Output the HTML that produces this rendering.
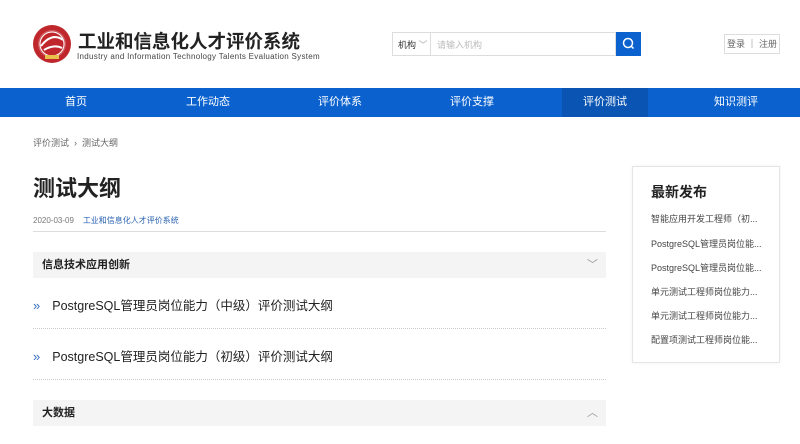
<!DOCTYPE html>
<html><head><meta charset="utf-8"><style>
*{margin:0;padding:0;box-sizing:border-box}
body{width:800px;height:444px;overflow:hidden;background:#fff;font-family:"Liberation Sans","Noto Sans CJK SC",sans-serif;position:relative;color:#333}
.a{position:absolute;white-space:nowrap}
.nav{position:absolute;left:0;top:88px;width:800px;height:29px;background:#0b62cf}
.nav span{position:absolute;top:0;height:29px;line-height:29px;color:#fff;font-size:11px;transform:translateX(-50%)}
.sec{position:absolute;left:33px;width:573px;height:26px;background:#f4f4f4;font-size:11px;font-weight:bold;line-height:26px;padding-left:9px;color:#222}
.item{position:absolute;left:33px;font-size:12.5px;color:#222}
.item b{color:#3a6fc0;font-weight:normal;margin-right:12px;font-size:13px}
.dot{position:absolute;left:33px;width:573px;border-top:1px dotted #ccc}
.side div{position:absolute;left:651px;font-size:9px;color:#444}
</style></head><body>
<svg class="a" style="left:32px;top:24px" width="40" height="40" viewBox="0 0 40 40">
<circle cx="20" cy="20" r="19" fill="#c0272d"/><circle cx="20" cy="20" r="14" fill="#fff" opacity=".25"/>
<circle cx="20" cy="20" r="12" fill="#c0272d" stroke="#fff" stroke-width="1"/>
<path d="M9 22 Q20 8 31 16 M12 26 Q22 20 30 24" stroke="#fff" stroke-width="2" fill="none"/>
<rect x="13" y="31" width="14" height="4" fill="#e8c04a"/></svg>
<div class="a" style="left:78px;top:28px;font-size:18.5px;font-weight:bold;color:#222">工业和信息化人才评价系统</div>
<div class="a" style="left:77px;top:52px;font-size:8px;color:#444;letter-spacing:0.3px">Industry and Information Technology Talents Evaluation System</div>
<div class="a" style="left:392px;top:32px;width:224px;height:24px;border:1px solid #ddd"></div>
<div class="a" style="left:398px;top:38px;font-size:9px;color:#333">机构 <span style="color:#aaa">﹀</span></div>
<div class="a" style="left:430px;top:33px;height:22px;border-left:1px solid #ddd"></div>
<div class="a" style="left:437px;top:38px;font-size:9px;color:#bbb">请输入机构</div>
<div class="a" style="left:616px;top:32px;width:25px;height:24px;background:#0b62cf"></div>
<svg class="a" style="left:621px;top:36px" width="15" height="15"><circle cx="7" cy="7" r="4.5" stroke="#fff" stroke-width="1.5" fill="none"/><path d="M10 10l2.5 2.5" stroke="#fff" stroke-width="1.5"/></svg>
<div class="a" style="left:724px;top:34px;width:56px;height:20px;border:1px solid #ddd;font-size:9px;color:#666;line-height:18px;text-align:center">登录 ｜ 注册</div>
<div class="nav">
<div class="a" style="left:562px;top:0;width:86px;height:29px;background:#0a55b3"></div>
<span style="left:76px">首页</span><span style="left:208px">工作动态</span><span style="left:340px">评价体系</span><span style="left:472px">评价支撑</span><span style="left:605px">评价测试</span><span style="left:736px">知识测评</span>
</div>
<div class="a" style="left:33px;top:136px;font-size:9px;color:#666">评价测试 &nbsp;›&nbsp; 测试大纲</div>
<div class="a" style="left:33px;top:171px;font-size:22px;font-weight:bold;color:#222">测试大纲</div>
<div class="a" style="left:33px;top:215px;font-size:8px;color:#777">2020-03-09 &nbsp;&nbsp;&nbsp;<span style="color:#2a62b0">工业和信息化人才评价系统</span></div>
<div class="a" style="left:33px;top:231px;width:573px;border-top:1px solid #ddd"></div>
<div class="sec" style="top:252px">信息技术应用创新<span style="position:absolute;right:8px;color:#999;font-weight:normal">﹀</span></div>
<div class="item" style="top:295px"><b>»</b>PostgreSQL管理员岗位能力（中级）评价测试大纲</div>
<div class="dot" style="top:328px"></div>
<div class="item" style="top:346px"><b>»</b>PostgreSQL管理员岗位能力（初级）评价测试大纲</div>
<div class="dot" style="top:379px"></div>
<div class="sec" style="top:400px">大数据<span style="position:absolute;right:8px;color:#999;font-weight:normal">︿</span></div>
<div class="a" style="left:632px;top:166px;width:148px;height:197px;border:1px solid #e5e5e5;box-shadow:0 0 3px rgba(0,0,0,.06)"></div>
<div class="side">
<div style="top:182px;font-size:14px;font-weight:bold;color:#222">最新发布</div>
<div style="top:212px">智能应用开发工程师（初...</div>
<div style="top:237px">PostgreSQL管理员岗位能...</div>
<div style="top:261px">PostgreSQL管理员岗位能...</div>
<div style="top:285px">单元测试工程师岗位能力...</div>
<div style="top:309px">单元测试工程师岗位能力...</div>
<div style="top:333px">配置项测试工程师岗位能...</div>
</div>
</body></html>
